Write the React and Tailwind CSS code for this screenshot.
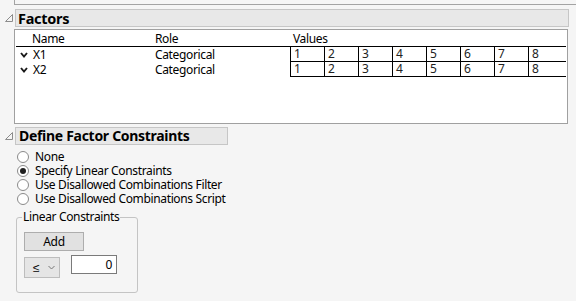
import React from "react";

function Tri() {
  return (
    <svg width="15" height="18" viewBox="0 0 15 18" className="shrink-0">
      <polygon points="12.5,5.5 12.5,12.5 5.5,12.5" fill="none" stroke="#8c8c8c" strokeWidth="1" />
    </svg>
  );
}

function Chev() {
  return (
    <svg width="8" height="6" viewBox="0 0 8 6">
      <polyline points="1,1 4,4.5 7,1" fill="none" stroke="#1a1a1a" strokeWidth="1.9" />
    </svg>
  );
}

function Radio({ checked, label }) {
  return (
    <div className="flex items-center h-[14px]">
      <div className="ml-[17px] w-[12px] h-[12px] rounded-full border border-[#8a8a8a] bg-white flex items-center justify-center">
        {checked && <div className="w-[6px] h-[6px] rounded-full bg-[#1f1f1f]" />}
      </div>
      <span className="ml-[6px] leading-[14px]">{label}</span>
    </div>
  );
}

const vals = ["1", "2", "3", "4", "5", "6", "7", "8"];

function Row({ name }) {
  return (
    <div className="flex h-[15px] items-stretch">
      <div className="w-[139px] flex items-center">
        <div className="ml-[4px] w-[13px] flex items-center"><Chev /></div>
        <span className="leading-[15px]">{name}</span>
      </div>
      <div className="w-[135px] flex items-center leading-[15px]">Categorical</div>
      <div className="flex border-b border-black">
        {vals.map((v, i) => (
          <div
            key={v}
            className={
              (i === 7 ? "w-[38px] " : "w-[34px] ") +
              "border-l border-black pl-[3px] leading-[14px] text-[#222]"
            }
          >
            {v}
          </div>
        ))}
      </div>
    </div>
  );
}

export default function App() {
  return (
    <div className="w-[576px] h-[301px] overflow-hidden bg-[#f5f5f5] text-[12px] text-black font-['Noto_Sans',sans-serif] tracking-[-0.35px]">
      <div className="ml-[14px] h-[5px] border-l border-b border-[#a3a3a3]" />

      <div className="mt-[4px] flex items-start">
        <Tri />
        <div className="w-[554px] h-[18px] bg-[#e8e8e8] border border-[#c6c6c6] flex items-center pl-[2px]">
          <span className="text-[14.5px] font-bold leading-[16px] tracking-[-0.3px]">Factors</span>
        </div>
      </div>

      <div className="mt-[2px] ml-[14px] w-[554px] h-[95px] bg-white border border-[#a0a0a0] pl-[1px] pt-[1px]">
        <div className="w-[550px] h-[16px] flex border-b border-black">
          <div className="w-[139px] pl-[16px] leading-[16px]">Name</div>
          <div className="w-[135px] leading-[16px]">Role</div>
          <div className="pl-[3px] leading-[16px]">Values</div>
        </div>
        <Row name="X1" />
        <Row name="X2" />
      </div>

      <div className="mt-[3px] flex items-start">
        <Tri />
        <div className="w-[213px] h-[18px] bg-[#e8e8e8] border border-[#c6c6c6] flex items-center pl-[3px]">
          <span className="text-[14px] font-bold leading-[16px] tracking-[-0.3px]">Define Factor Constraints</span>
        </div>
      </div>

      <div className="mt-[5px] flex flex-col">
        <Radio label="None" />
        <Radio label="Specify Linear Constraints" checked />
        <Radio label="Use Disallowed Combinations Filter" />
        <Radio label="Use Disallowed Combinations Script" />
      </div>

      <fieldset className="mt-[4px] ml-[16px] w-[122px] h-[83px] border border-[#c4c4c4] rounded-[3px] px-[7px] pt-0 pb-0">
        <legend className="px-[1px] ml-[-2px] leading-[14px]">Linear Constraints</legend>
        <div className="mt-[8px] w-[60px] h-[19px] bg-[#e1e1e1] border border-[#adadad] flex items-center justify-center leading-[14px]">
          Add
        </div>
        <div className="mt-[4px] flex items-start">
          <div className="mt-[2px] w-[36px] h-[21px] bg-[#e5e5e5] border border-[#bdbdbd] flex items-center">
            <span className="ml-[8px] leading-[14px]">≤</span>
            <svg width="7" height="5" viewBox="0 0 7 5" className="ml-[9px]">
              <polyline points="0.5,1 3.5,4 6.5,1" fill="none" stroke="#777" strokeWidth="1" />
            </svg>
          </div>
          <div className="ml-[11px] w-[46px] h-[19px] bg-white border border-[#7a7a7a] flex items-center justify-end pr-[4px] leading-[14px]">
            0
          </div>
        </div>
      </fieldset>
    </div>
  );
}
